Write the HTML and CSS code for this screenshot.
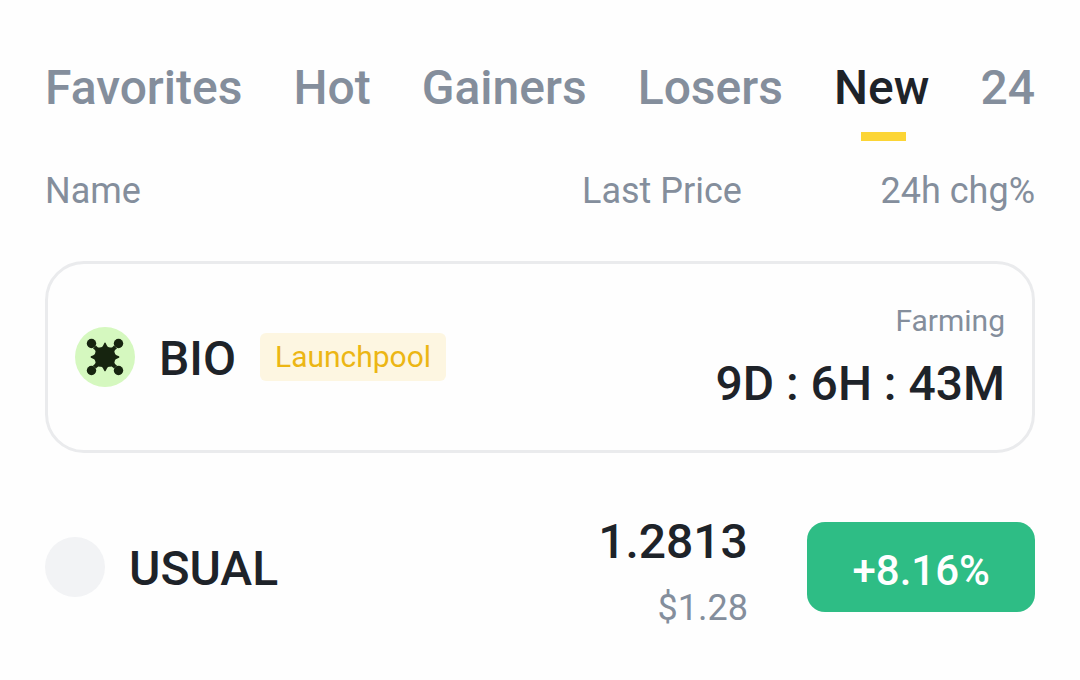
FILE: index.html
```html
<!DOCTYPE html>
<html lang="en">
<head>
    <meta charset="UTF-8">
    <meta name="viewport" content="width=device-width, initial-scale=1.0">
    <title>Markets</title>
    <link rel="stylesheet" href="styles.css">
</head>
<body>
    <main class="market">
        <nav class="tabs">
            <button type="button" class="tab">Favorites</button>
            <button type="button" class="tab">Hot</button>
            <button type="button" class="tab">Gainers</button>
            <button type="button" class="tab">Losers</button>
            <button type="button" class="tab active">New</button>
            <button type="button" class="tab">24</button>
        </nav>

        <table class="coins">
            <thead>
                <tr>
                    <th class="col-name">Name</th>
                    <th class="col-price">Last Price</th>
                    <th class="col-change">24h chg%</th>
                </tr>
            </thead>
            <tbody>
                <tr>
                    <td colspan="3">
                        <div class="card">
                            <div class="coin">
                                <svg class="coin-icon" viewBox="0 0 60 60" aria-hidden="true">
                                    <circle cx="30" cy="30" r="30" fill="#d5f8bf"/>
                                    <g fill="#16240f">
                                        <path d="M30 15.500 C31.500 16 31.500 20 34 20.200 C36 20.500 36.500 21.500 39 18.500 L42 21.500 C38.500 24 39.500 24.500 39.800 26 C40 28.500 44 28.500 44.500 30 C44 31.500 40 31.500 39.800 34 C39.500 35.500 38.500 36 42 38.500 L39 41.500 C36.500 38.500 36 39.500 34 39.800 C31.500 40 31.500 44 30 44.500 C28.500 44 28.500 40 26 39.800 C24 39.500 23.500 38.500 21 41.500 L18 38.500 C21.500 36 20.500 35.500 20.200 34 C20 31.500 16 31.500 15.500 30 C16 28.500 20 28.500 20.200 26 C20.500 24.500 21.500 24 18 21.500 L21 18.500 C23.500 21.500 24 20.500 26 20.200 C28.500 20 28.500 16 30 15.500Z"/>
                                        <circle cx="16.500" cy="16.500" r="4.700"/>
                                        <circle cx="43.500" cy="16.500" r="4.700"/>
                                        <circle cx="16.500" cy="43.500" r="4.700"/>
                                        <circle cx="43.500" cy="43.500" r="4.700"/>
                                    </g>
                                </svg>
                                <span class="symbol">BIO</span>
                                <span class="badge">Launchpool</span>
                            </div>
                            <div class="farming">
                                <span class="farming-label">Farming</span>
                                <span class="countdown">9D : 6H : 43M</span>
                            </div>
                        </div>
                    </td>
                </tr>
                <tr class="coin-row">
                    <td>
                        <div class="coin">
                            <span class="coin-icon placeholder"></span>
                            <span class="symbol">USUAL</span>
                        </div>
                    </td>
                    <td class="price">
                        <div class="last">1.2813</div>
                        <div class="fiat">$1.28</div>
                    </td>
                    <td class="change"><span class="pill">+8.16%</span></td>
                </tr>
            </tbody>
        </table>
    </main>
</body>
</html>
```
FILE: styles.css
```css
* {
    box-sizing: border-box;
}
body {
    margin: 0;
    background-color: #fefefe;
    color: #1e2329;
    font-family: Roboto, "Liberation Sans", sans-serif;
}
.market {
    padding: 56px 45px 0;
}

/* Tabs */
.tabs {
    display: flex;
    justify-content: space-between;
}
.tab {
    position: relative;
    padding: 0 0 21px;
    border: none;
    background: none;
    color: #848e9c;
    font-family: inherit;
    font-size: 48px;
    font-weight: 500;
    line-height: 64px;
    cursor: pointer;
}
.tab.active {
    color: #1e2329;
}
.tab.active::after {
    content: '';
    position: absolute;
    left: 50%;
    bottom: 0;
    width: 45px;
    height: 9px;
    margin-left: -21px;
    background-color: #fcd535;
}

/* Coin list */
.coins {
    width: 100%;
    margin-top: 28px;
    border-collapse: collapse;
    table-layout: fixed;
}
.coins th {
    padding: 0;
    color: #848e9c;
    font-size: 36px;
    font-weight: 400;
    line-height: 44px;
    text-align: right;
}
.coins td {
    padding: 0;
}
.coins .col-name {
    width: 35%;
    text-align: left;
}
.coins .col-price {
    padding-right: 6px;
}
.coins .col-change {
    width: 29%;
}
.card {
    display: flex;
    align-items: center;
    justify-content: space-between;
    margin-top: 48px;
    padding: 33px 27px;
    border: 3px solid #eaebed;
    border-radius: 39px;
}
.coin {
    display: flex;
    align-items: center;
}
.coin-icon {
    width: 60px;
    height: 60px;
    margin-right: 24px;
}
.placeholder {
    border-radius: 50%;
    background-color: #f2f3f5;
}
.symbol {
    padding-top: 4px;
    font-size: 48px;
    font-weight: 500;
    line-height: 56px;
}
.badge {
    margin-left: 24px;
    padding: 0 15px;
    border-radius: 6px;
    background-color: #fdf6e1;
    color: #ecb614;
    font-size: 30px;
    line-height: 48px;
}
.farming {
    display: flex;
    flex-direction: column;
    text-align: right;
}
.farming-label {
    color: #848e9c;
    font-size: 30px;
    line-height: 48px;
}
.countdown {
    padding-top: 6px;
    font-size: 48px;
    font-weight: 500;
    line-height: 66px;
}
.coin-row td {
    padding-top: 40px;
}
.coin-row .price {
    padding-top: 56px;
    text-align: right;
}
.last {
    font-size: 48px;
    font-weight: 500;
    line-height: 66px;
}
.fiat {
    color: #848e9c;
    font-size: 36px;
    line-height: 66px;
}
.change {
    text-align: right;
}
.pill {
    display: inline-block;
    padding: 8px 45px 0;
    border-radius: 18px;
    background-color: #2ebd85;
    color: #fff;
    font-size: 42px;
    font-weight: 500;
    line-height: 82px;
    vertical-align: middle;
}
```
